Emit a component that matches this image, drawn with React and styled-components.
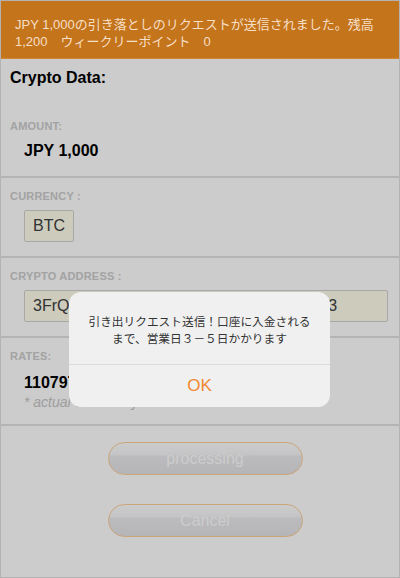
import React from "react";
import styled, { createGlobalStyle } from "styled-components";

const GlobalStyle = createGlobalStyle`
  html, body {
    margin: 0;
    padding: 0;
    background: #ffffff;
  }
  body {
    font-family: "Liberation Sans", "Noto Sans CJK JP", sans-serif;
  }
`;

const App = () => {
  return (
    <>
      <GlobalStyle />
      <Frame>
        <Toast>
          JPY 1,000の引き落としのリクエストが送信されました。残高
          <br />
          1,200　ウィークリーポイント　0
        </Toast>
        <Title>Crypto Data:</Title>
        <Field>
          <Label>AMOUNT:</Label>
          <Value>JPY 1,000</Value>
        </Field>
        <Field>
          <Label>CURRENCY :</Label>
          <InputBox>BTC</InputBox>
        </Field>
        <Field>
          <Label>CRYPTO ADDRESS :</Label>
          <InputBox $full>3FrQo7Hn2GkXb9cTq1ZpVw5Mr8YsLd4t3</InputBox>
        </Field>
        <Field>
          <Label>RATES:</Label>
          <RateValue>1107975.32</RateValue>
          <Note>* actual value may differ</Note>
        </Field>
        <Actions>
          <PillButton disabled>processing</PillButton>
          <PillButton disabled>Cancel</PillButton>
        </Actions>
        <Backdrop />
        <Alert>
          <AlertMessage>
            引き出リクエスト送信！口座に入金される
            <br />
            まで、営業日３－５日かかります
          </AlertMessage>
          <AlertButton>OK</AlertButton>
        </Alert>
      </Frame>
    </>
  );
};

const Frame = styled.div`
  position: relative;
  height: 578px;
  box-sizing: border-box;
  border: 1px solid #b3b3b3;
  overflow: hidden;
  background: #ffffff;
`;

const Toast = styled.div`
  position: relative;
  z-index: 3;
  background: #c4741b;
  color: #f6dfc7;
  font-size: 13px;
  line-height: 17px;
  padding: 15px 15px 8px 14px;
  border-bottom: 1px solid #cf8536;
`;

const Title = styled.div`
  padding: 9px 9px 20px;
  font-size: 16px;
  line-height: 20px;
  font-weight: bold;
  color: #000;
`;

const Field = styled.div`
  padding: 11px 9px 14px;
  border-bottom: 2px solid #e2e2e2;
`;

const Label = styled.div`
  font-size: 11px;
  line-height: 14px;
  font-weight: bold;
  color: #cccccc;
  letter-spacing: 0.2px;
`;

const Value = styled.div`
  margin: 7px 0 0 14px;
  font-size: 16px;
  line-height: 22px;
  font-weight: bold;
  color: #000;
`;

const RateValue = styled(Value)`
  margin-top: 9px;
`;

const Note = styled.div`
  margin-left: 14px;
  font-size: 14px;
  line-height: 16px;
  font-style: italic;
  color: #c6c6c6;
`;

const InputBox = styled.div`
  width: ${(p) => (p.$full ? "auto" : "fit-content")};
  margin: 7px ${(p) => (p.$full ? "2px" : "0")} 0 14px;
  height: 32px;
  box-sizing: border-box;
  padding: 0 8px;
  border: 1px solid #d3d3d3;
  border-radius: 2px;
  background: #fffeec;
  color: #404040;
  font-size: 16px;
  line-height: 30px;
  white-space: nowrap;
  overflow: hidden;
`;

const Actions = styled.div`
  display: flex;
  flex-direction: column;
  align-items: center;
  gap: 29px;
  padding: 16px 0 0 10px;
`;

const PillButton = styled.button`
  width: 195px;
  height: 33px;
  border: 1px solid #ffcd98;
  border-radius: 17px;
  background: linear-gradient(
    #ffffff 0%,
    #f6f6f8 38%,
    #ebebee 42%,
    #e3e3e6 100%
  );
  color: #ffffff;
  font-family: "Liberation Sans", sans-serif;
  font-size: 16px;
  padding: 0;
`;

const Backdrop = styled.div`
  position: absolute;
  inset: 0;
  z-index: 1;
  background: rgba(0, 0, 0, 0.2);
`;

const Alert = styled.div`
  position: absolute;
  z-index: 2;
  top: 291px;
  left: 50%;
  margin-left: -131px;
  width: 261px;
  border-radius: 12px;
  background: #f0f0f0;
  overflow: hidden;
`;

const AlertMessage = styled.div`
  padding: 20px 12px 18px;
  text-align: center;
  font-family: "Noto Sans CJK JP", sans-serif;
  font-size: 11.7px;
  line-height: 17px;
  color: #333;
`;

const AlertButton = styled.div`
  height: 42px;
  border-top: 1px solid #dcdcdc;
  display: flex;
  align-items: center;
  justify-content: center;
  font-size: 17px;
  color: #f0872f;
`;

export default App;
